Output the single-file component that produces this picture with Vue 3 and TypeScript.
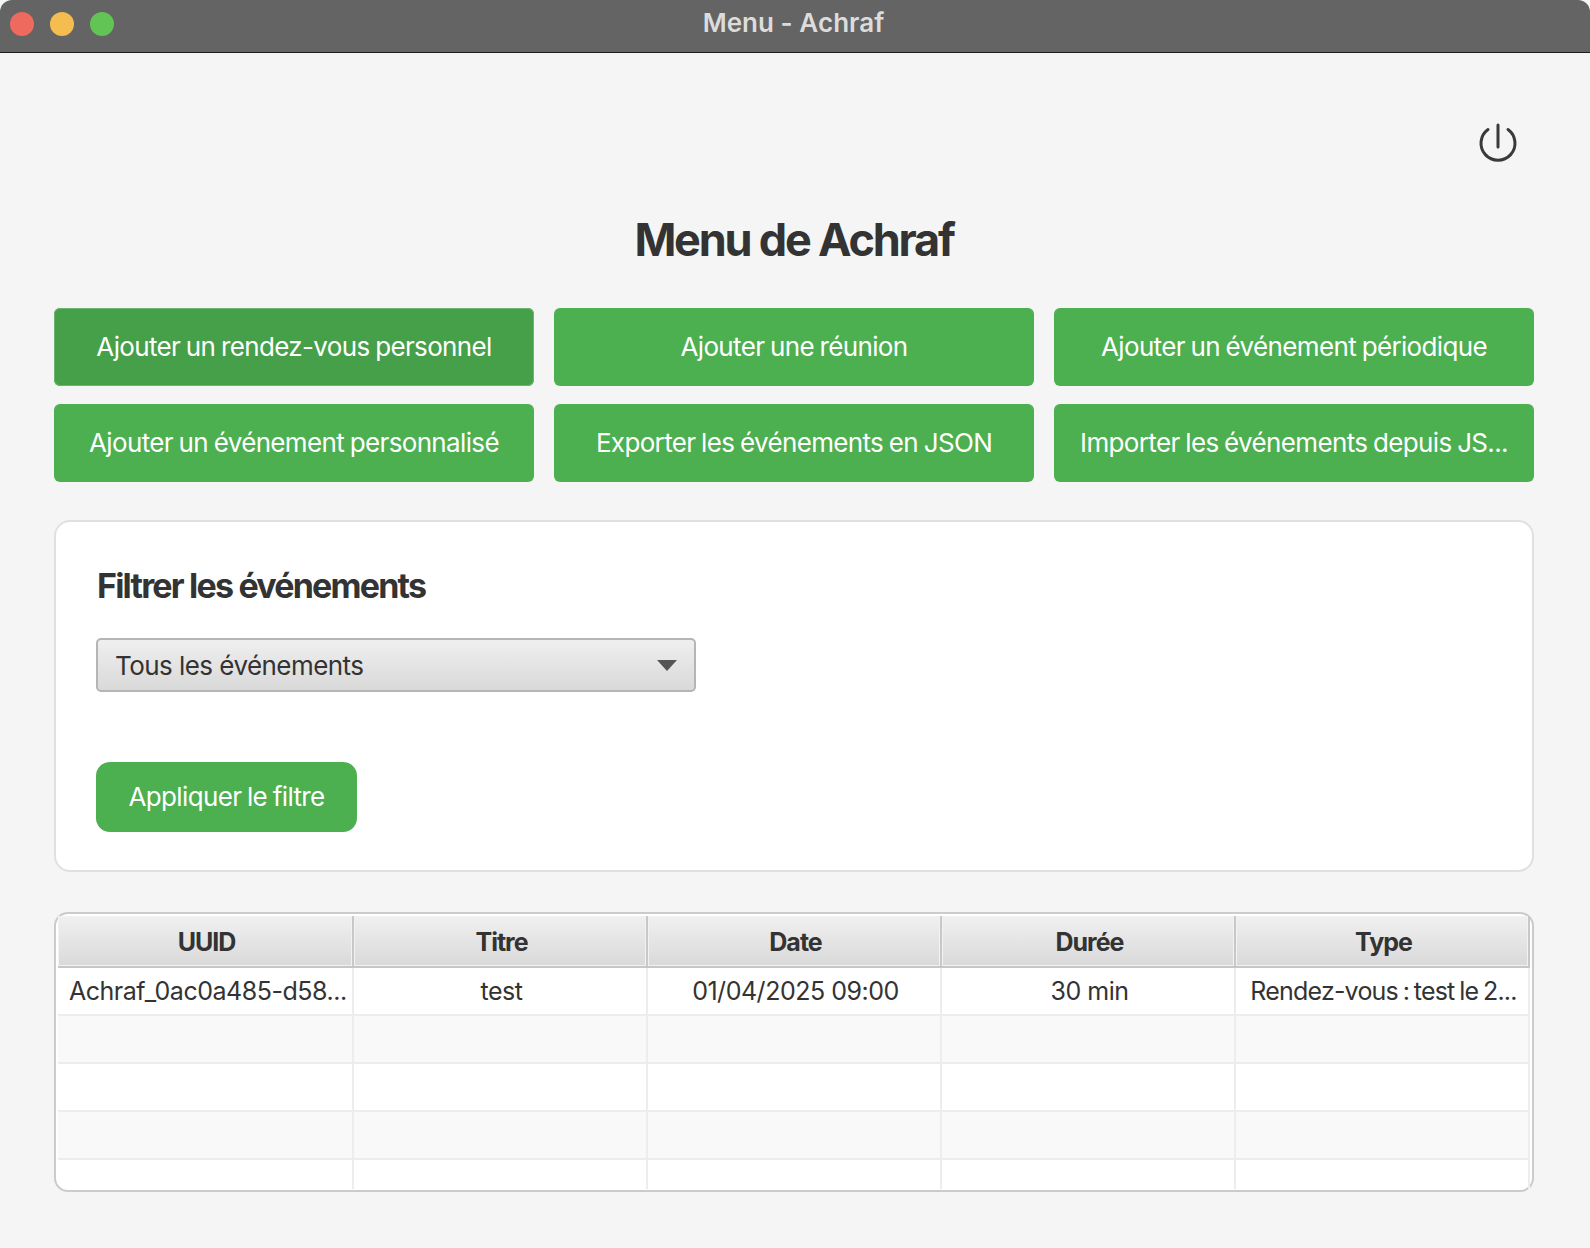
<script setup lang="ts">
const actions = [
  'Ajouter un rendez-vous personnel',
  'Ajouter une réunion',
  'Ajouter un événement périodique',
  'Ajouter un événement personnalisé',
  'Exporter les événements en JSON',
  'Importer les événements depuis JS...'
]

const columns = ['UUID', 'Titre', 'Date', 'Durée', 'Type']
</script>

<template>
  <div class="window">
    <header class="titlebar">
      <div class="lights">
        <span class="light red"></span>
        <span class="light yellow"></span>
        <span class="light green"></span>
      </div>
      <span class="window-title">Menu - Achraf</span>
    </header>

    <main class="content">
      <div class="top-row">
        <svg class="power" width="40" height="42" viewBox="0 0 40 42" fill="none" stroke="#3a3a3a" stroke-width="3" stroke-linecap="round">
          <path d="M20 2v22" />
          <path d="M10 6.5a17 17 0 1 0 20 0" />
        </svg>
      </div>

      <h1>Menu de Achraf</h1>

      <div class="actions">
        <button v-for="(a, i) in actions" :key="a" class="action" :class="{ hover: i === 0 }">{{ a }}</button>
      </div>

      <section class="filter-card">
        <h2>Filtrer les événements</h2>
        <div class="select">
          <span>Tous les événements</span>
          <i class="arrow"></i>
        </div>
        <button class="apply">Appliquer le filtre</button>
      </section>

      <div class="table-box">
        <div class="thead">
          <div v-for="c in columns" :key="c" class="th">{{ c }}</div>
        </div>
        <div class="row">
          <div class="td left">Achraf_0ac0a485-d58...</div>
          <div class="td">test</div>
          <div class="td">01/04/2025 09:00</div>
          <div class="td">30 min</div>
          <div class="td type">Rendez-vous : test le 2...</div>
        </div>
        <div v-for="n in 3" :key="n" class="row" :class="{ alt: n !== 2 }">
          <div v-for="c in columns" :key="c" class="td"></div>
        </div>
        <div class="row last">
          <div v-for="c in columns" :key="c" class="td"></div>
        </div>
      </div>
    </main>
  </div>
</template>

<style>
html,
body {
  margin: 0;
  background: #f4f4f4;
}
</style>

<style scoped>
.window {
  width: 1590px;
  height: 1248px;
  background: #f5f5f5;
  font-family: Inter, "Liberation Sans", sans-serif;
  color: #333;
  overflow: hidden;
}

.titlebar {
  position: relative;
  height: 52px;
  background: #636463;
  border-bottom: 1px solid #1c1c1c;
  display: flex;
  align-items: center;
  justify-content: center;
  border-radius: 12px 12px 0 0;
}

.lights {
  position: absolute;
  left: 10px;
  top: 12px;
  display: flex;
  gap: 16px;
}

.light {
  width: 24px;
  height: 24px;
  border-radius: 50%;
}

.red { background: #ee6a5f; }
.yellow { background: #f5bd4f; }
.green { background: #61c454; }

.window-title {
  color: #dcdcdc;
  font-size: 26px;
  font-weight: 600;
  letter-spacing: 0.05px;
  margin: 0 3px 8px 0;
}

.content {
  padding: 0 56px 0 54px;
}

.top-row {
  display: flex;
  justify-content: flex-end;
  padding: 70px 16px 0 0;
}

.power {
  display: block;
}

h1 {
  margin: 31px 0 24px;
  height: 88px;
  text-align: center;
  font-size: 45px;
  line-height: 88px;
  font-weight: 700;
  letter-spacing: -2.2px;
  color: #333;
}

.actions {
  display: grid;
  grid-template-columns: repeat(3, 480px);
  grid-auto-rows: 78px;
  column-gap: 20px;
  row-gap: 18px;
}

button {
  font-family: inherit;
  border: none;
  color: #fff;
  background: #4caf50;
}

.action {
  border-radius: 6px;
  font-size: 26px;
  letter-spacing: -0.65px;
  word-spacing: -1px;
  white-space: nowrap;
  padding: 0 0 2px;
}

.action.hover {
  background: #45a049;
  box-shadow: inset 0 0 0 1px #6cb56f;
}

.filter-card {
  margin-top: 38px;
  height: 352px;
  box-sizing: border-box;
  background: #fff;
  border: 2px solid #e0e0e0;
  border-radius: 16px;
  padding: 42px 40px 0;
}

h2 {
  margin: 0 0 0 1px;
  font-size: 34px;
  line-height: 44px;
  font-weight: 700;
  letter-spacing: -1.8px;
  color: #333;
}

.select {
  margin-top: 30px;
  width: 600px;
  height: 54px;
  box-sizing: border-box;
  border: 2px solid #b5b5b5;
  border-radius: 5px;
  background: linear-gradient(#efefef, #d9d9d9);
  display: flex;
  align-items: center;
  justify-content: space-between;
  padding: 0 17px;
  font-size: 26px;
  letter-spacing: -0.55px;
  color: #333;
}

.arrow {
  width: 0;
  height: 0;
  border-left: 10px solid transparent;
  border-right: 10px solid transparent;
  border-top: 11px solid #555;
}

.apply {
  display: block;
  margin-top: 70px;
  width: 261px;
  height: 70px;
  border-radius: 14px;
  font-size: 26px;
  letter-spacing: -0.65px;
  word-spacing: -1px;
  padding: 0 0 2px;
}

.table-box {
  margin-top: 40px;
  height: 280px;
  box-sizing: border-box;
  background: #fff;
  border: 2px solid #cbcbcb;
  border-radius: 14px;
  padding: 2px 2px 0 2px;
}

.thead,
.row {
  display: grid;
  grid-template-columns: 296px 294px 294px 294px 1fr;
}

.thead {
  height: 50px;
  border-bottom: 2px solid #c6c6c6;
}

.th {
  display: flex;
  align-items: center;
  justify-content: center;
  background: linear-gradient(#f0f0f0, #d9d9d9);
  border-right: 2px solid #c8c8c8;
  box-shadow: inset 0 0 0 1px #f2f2f2;
  padding: 2px 0 0 3px;
  font-size: 25px;
  font-weight: 700;
  letter-spacing: -1px;
  color: #333;
}

.row {
  height: 48px;
  box-sizing: border-box;
  border-bottom: 2px solid #ededed;
}

.row.alt {
  background: #f9f9f9;
}

.row.last {
  border-bottom: none;
  height: 29px;
}

.td {
  display: flex;
  align-items: center;
  justify-content: center;
  border-right: 2px solid #ededed;
  padding-left: 3px;
  font-size: 25px;
  letter-spacing: -0.48px;
  white-space: nowrap;
  color: #333;
}

.td.left {
  justify-content: flex-start;
  padding-left: 11px;
}

.td.type {
  letter-spacing: -0.8px;
  word-spacing: -1.5px;
}
</style>
